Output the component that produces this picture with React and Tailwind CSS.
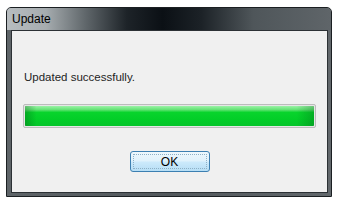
export default function App() {
  return (
    <div className="w-[338px] h-[205px] bg-white pt-[7px] pl-[6px] font-['Liberation_Sans',Arial,sans-serif]">
      {/* window frame */}
      <div className="w-[326px] h-[190px] flex flex-col border border-[#1b1f22] rounded-t-[5px] bg-[linear-gradient(to_right,#5e6468,#52585c_50%,#62686c)] overflow-hidden">
        {/* title bar */}
        <div className="h-[22px] flex items-center pl-[5px] bg-[linear-gradient(to_right,#b8bdc0_0%,#a6acaf_12%,#61686c_24%,#1d2328_37%,#0b1015_48%,#1c2227_60%,#4f565a_76%,#5f6569_100%)]">
          <span className="text-[12px] text-black">Update</span>
        </div>
        {/* client area */}
        <div className="flex-1 ml-[4px] mr-[3px] mb-[3px] border border-[#2c3135] bg-[#f0f0f0] flex flex-col px-[11px]">
          <div className="mt-[38px] h-[16px] pl-[1px] text-[11.5px] text-[#1e1e1e] leading-[16px]">
            Updated successfully.
          </div>
          {/* progress bar */}
          <div className="mt-[19px] h-[24px] rounded-[2px] border border-[#bcbcbc] bg-[#e6e6e6] p-px">
            <div className="relative h-full rounded-[1px] bg-[linear-gradient(to_bottom,#9af2a6_0%,#66e376_18%,#08d42c_32%,#02cd28_70%,#05c52a_100%)]">
              <div className="absolute inset-0 bg-[linear-gradient(to_right,rgba(0,90,20,0.35)_0%,rgba(0,90,20,0)_4%,rgba(0,90,20,0)_94%,rgba(0,90,20,0.3)_100%)]" />
            </div>
          </div>
          {/* button row */}
          <div className="mt-[23px] flex justify-center">
            <button className="w-[80px] h-[21px] rounded-[3px] border border-[#3c7fb1] bg-[linear-gradient(to_bottom,#eef8fd_0%,#e0f2fc_45%,#cbe9fb_55%,#b6def5_100%)] p-[2px]">
              <div className="h-full w-full border border-dotted border-[#8fb0c6] flex items-center justify-center text-[12px] text-black leading-none">
                OK
              </div>
            </button>
          </div>
        </div>
      </div>
    </div>
  );
}
